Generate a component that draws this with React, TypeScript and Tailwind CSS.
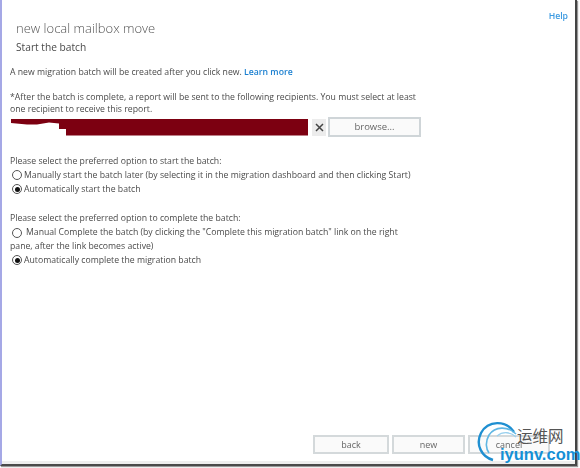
export default function App() {
  return (
    <div className="relative w-[580px] h-[468px] bg-white overflow-hidden font-['Open_Sans',sans-serif] text-[#4a4a4a] text-[8.7px]">
      <div className="blur-[0.4px] flex flex-col w-[577px] h-[466px] border-l-2 border-l-[#a5a8e6] border-r-2 border-r-[#444] border-b-[2px] border-b-[#4a4a4a] bg-white shadow-[1px_1px_1px_#999]">
        <div className="flex-1 flex flex-col pl-[8px] pr-[20px] relative border-b-[3px] border-b-[#eeeeee]">
          <a className="absolute right-[7px] top-[10px] text-[8.7px] font-semibold text-[#3b9ae1]">Help</a>

          <div className="pl-[6px] pt-[19px] text-[13px] leading-[19px] font-light text-[#555]">new local mailbox move</div>
          <div className="pl-[6px] pt-[1px] text-[10.2px] leading-[16px] text-[#4a4a4a]">Start the batch</div>

          <div className="mt-[11px] leading-[12px]">
            A new migration batch will be created after you click new.{' '}
            <span className="font-semibold text-[#1a7fd0]">Learn more</span>
          </div>

          <div className="mt-[13px] w-[410px] leading-[12px]">
            *After the batch is complete, a report will be sent to the following recipients. You must select at least one recipient to receive this report.
          </div>

          <div className="mt-[4px] flex items-start h-[17px]">
            <svg width="298" height="17" viewBox="0 0 298 17" className="shrink-0 ml-[1px]">
              <path d="M0 0H297V16.5H55V10H48V4.5L38 3.5L26 5.5H16L0 4Z" fill="#7c0011" />
            </svg>
            <div className="w-[14px] h-[17px] ml-[3px] bg-[#ececec] flex items-center justify-center">
              <svg width="9" height="9" viewBox="0 0 9 9">
                <path d="M1 1L8 8M8 1L1 8" stroke="#444" strokeWidth="1.5" fill="none" />
              </svg>
            </div>
            <button className="ml-[2px] w-[93px] h-[20px] -mt-[2px] border-2 border-[#cfd5d8] bg-[#fafafa] text-[9.5px] text-[#666] leading-none">browse...</button>
          </div>

          <div className="mt-[18px] leading-[14px]">Please select the preferred option to start the batch:</div>
          <Radio label="Manually start the batch later (by selecting it in the migration dashboard and then clicking Start)" />
          <Radio checked label="Automatically start the batch" />

          <div className="mt-[15px] leading-[14px]">Please select the preferred option to complete the batch:</div>
          <div className="w-[395px] leading-[14px]">
            <span className="inline-block w-[16px] h-[10px] align-middle relative">
              <span className="absolute left-[2px] top-0 w-[10px] h-[10px] rounded-full border border-[#555] bg-white" />
            </span>
            Manual Complete the batch (by clicking the "Complete this migration batch" link on the right pane, after the link becomes active)
          </div>
          <Radio checked label="Automatically complete the migration batch" />

          <div className="flex-1" />

          <div className="flex justify-start gap-[3px] pl-[303px] pb-[7px]">
            <button className="w-[76px] h-[19px] border-2 border-[#d4d9db] bg-[#fafafa] text-[9px] text-[#666] leading-none">back</button>
            <button className="w-[73px] h-[19px] border-2 border-[#d4d9db] bg-[#fafafa] text-[9px] text-[#666] leading-none">new</button>
            <button className="w-[82px] h-[19px] border-2 border-[#d4d9db] bg-[#fafafa] text-[9px] text-[#666] leading-none">cancel</button>
          </div>
        </div>
      </div>

      {/* watermark */}
      <div className="absolute left-[476px] top-[420px] w-[104px] h-[48px]">
        <svg width="60" height="46" viewBox="0 0 60 46" className="absolute left-0 top-0">
          <path d="M38 12C30 0 12 0 5 13C-1 25 6 37 17 40" stroke="#1f8fd1" strokeWidth="2.4" fill="none" />
          <path d="M40 14C32 6 19 6 13 15C9 22 10 29 13 33" stroke="#5fb6e3" strokeWidth="1.6" fill="none" />
          <path d="M40 17C35 12 27 11 21 16" stroke="#9ad0ee" strokeWidth="1.3" fill="none" />
        </svg>
        <span className="absolute left-[41px] top-[5px] text-[15.5px] leading-[20px] text-[#555] font-['Noto_Sans_CJK_SC',sans-serif]">运维网</span>
        <span className="absolute left-[24px] top-[24px] text-[16.5px] leading-[20px] font-bold text-[#1590d6] font-['Liberation_Sans',sans-serif]">iyunv.com</span>
      </div>
    </div>
  );
}

function Radio({ label, checked }: { label: string; checked?: boolean }) {
  return (
    <div className="flex items-center leading-[14px]">
      <span className="relative shrink-0 w-[10px] h-[10px] ml-[2px] mr-[2px] rounded-full border border-[#555] bg-white">
        {checked && <span className="absolute left-[1.5px] top-[1.5px] w-[5px] h-[5px] rounded-full bg-[#111]" />}
      </span>
      <span>{label}</span>
    </div>
  );
}
